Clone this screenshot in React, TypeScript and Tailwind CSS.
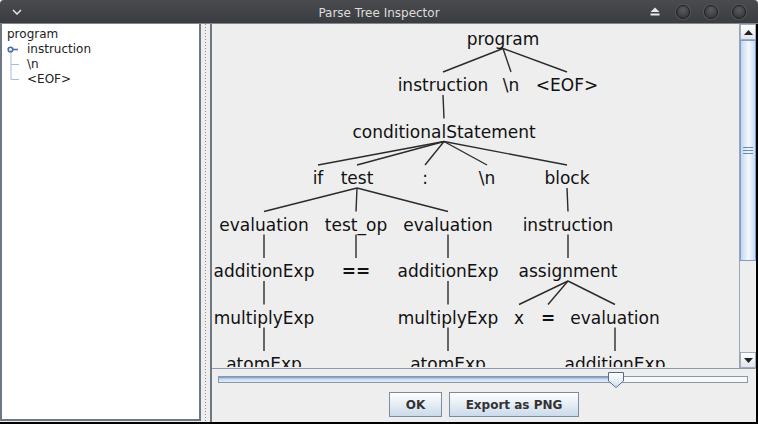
import React from "react";

type Node = { id: string; label: string; x: number; row: number; parent?: string; bold?: boolean };

// page coordinates of each node centre, rows are 46.5px apart
const nodes: Node[] = [
  { id: "program", label: "program", x: 503, row: 0 },
  { id: "instr", label: "instruction", x: 443, row: 1, parent: "program" },
  { id: "nl1", label: "\\n", x: 511, row: 1, parent: "program" },
  { id: "eof", label: "<EOF>", x: 567, row: 1, parent: "program" },
  { id: "cond", label: "conditionalStatement", x: 444, row: 2, parent: "instr" },
  { id: "if", label: "if", x: 318, row: 3, parent: "cond" },
  { id: "test", label: "test", x: 357, row: 3, parent: "cond" },
  { id: "colon", label: ":", x: 425, row: 3, parent: "cond" },
  { id: "nl2", label: "\\n", x: 487, row: 3, parent: "cond" },
  { id: "block", label: "block", x: 567, row: 3, parent: "cond" },
  { id: "ev1", label: "evaluation", x: 264, row: 4, parent: "test" },
  { id: "testop", label: "test_op", x: 356, row: 4, parent: "test" },
  { id: "ev2", label: "evaluation", x: 448, row: 4, parent: "test" },
  { id: "instr2", label: "instruction", x: 568, row: 4, parent: "block" },
  { id: "add1", label: "additionExp", x: 264, row: 5, parent: "ev1" },
  { id: "eq", label: "==", x: 356, row: 5, parent: "testop", bold: true },
  { id: "add2", label: "additionExp", x: 448, row: 5, parent: "ev2" },
  { id: "assign", label: "assignment", x: 568, row: 5, parent: "instr2" },
  { id: "mul1", label: "multiplyExp", x: 264, row: 6, parent: "add1" },
  { id: "mul2", label: "multiplyExp", x: 448, row: 6, parent: "add2" },
  { id: "x", label: "x", x: 519, row: 6, parent: "assign" },
  { id: "assigneq", label: "=", x: 548, row: 6, parent: "assign", bold: true },
  { id: "ev3", label: "evaluation", x: 615, row: 6, parent: "assign" },
  { id: "atom1", label: "atomExp", x: 264, row: 7, parent: "mul1" },
  { id: "atom2", label: "atomExp", x: 448, row: 7, parent: "mul2" },
  { id: "add3", label: "additionExp", x: 615, row: 7, parent: "ev3" },
];

const OX = 212;
const OY = 25;
const baseline = (row: number) => 45.5 + row * 46.5 - OY;

function ParseTree() {
  const byId = new Map(nodes.map((n) => [n.id, n]));
  return (
    <svg width={526} height={343} className="block">
      {nodes
        .filter((n) => n.parent)
        .map((n) => {
          const p = byId.get(n.parent!)!;
          return (
            <line
              key={"l" + n.id}
              x1={p.x - OX}
              y1={baseline(p.row) + 4}
              x2={n.x - OX}
              y2={baseline(n.row) - 19}
              stroke="#2b2b2b"
              strokeWidth={1.4}
            />
          );
        })}
      {nodes.map((n) => (
        <text
          key={n.id}
          x={n.x - OX}
          y={baseline(n.row)}
          textAnchor="middle"
          fontSize={17}
          fontWeight={n.bold ? 700 : 400}
          fill="#111"
          style={{ fontFamily: "'DejaVu Sans', sans-serif" }}
        >
          {n.label}
        </text>
      ))}
    </svg>
  );
}

function Connector({ handle, last }: { handle?: boolean; last?: boolean }) {
  return (
    <svg width={25} height={15} className="shrink-0">
      {handle ? (
        <>
          <line x1={9} y1={7.5} x2={9} y2={15} stroke="#a9bcd4" />
          <circle cx={8.5} cy={7.5} r={2.3} fill="none" stroke="#4a6ea8" strokeWidth={1.6} />
          <line x1={11} y1={7.5} x2={16} y2={7.5} stroke="#4a6ea8" strokeWidth={1.6} />
        </>
      ) : (
        <>
          <line x1={9} y1={0} x2={9} y2={last ? 7.5 : 15} stroke="#a9bcd4" />
          <line x1={9} y1={7.5} x2={17} y2={7.5} stroke="#a9bcd4" />
        </>
      )}
    </svg>
  );
}

function TitleBar() {
  return (
    <div className="relative flex h-[24px] items-center rounded-t-[4px] bg-[linear-gradient(to_bottom,#4a4b4e,#3b3c3f)] border-b border-[#7c8995]">
      <svg width={10} height={6} className="ml-[12px]" viewBox="0 0 10 6">
        <path d="M1 1 L5 5 L9 1" fill="none" stroke="#e4e4e4" strokeWidth={1.5} />
      </svg>
      <div className="absolute left-0 right-0 top-[4px] text-center text-[12px] text-[#dcdcdc]">
        Parse Tree Inspector
      </div>
      <div className="ml-auto mr-[12px] flex items-center gap-[14px]">
        <svg width={10} height={9} viewBox="0 0 10 9" className="mr-[2px]">
          <path d="M5 0.5 L9.5 5 L0.5 5 Z" fill="#e8e8e8" />
          <rect x={0.5} y={6.5} width={9} height={2} fill="#e8e8e8" />
        </svg>
        {[0, 1, 2].map((i) => (
          <div
            key={i}
            className="h-[14px] w-[14px] rounded-full border border-[#222] bg-[radial-gradient(circle_at_50%_35%,#5a5b5f,#2e2f31)] shadow-[0_0_0_1px_#55565a]"
          />
        ))}
      </div>
    </div>
  );
}

function VScrollBar() {
  return (
    <div className="flex w-[17px] flex-col border-l border-[#9aa7b4] bg-[#eeeeee]">
      <div className="flex h-[16px] items-center justify-center border border-[#a3adb8] bg-[linear-gradient(to_bottom,#ffffff,#dfe5ec)]">
        <svg width={9} height={5} viewBox="0 0 9 5">
          <path d="M4.5 0 L9 5 L0 5 Z" fill="#222" />
        </svg>
      </div>
      <div className="flex h-[221px] items-center justify-center border border-[#7b9bd2] bg-[linear-gradient(to_right,#c5d8ee,#f4f8fc_55%,#c9dbef)]">
        <div className="flex w-[10px] flex-col gap-[2px]">
          <div className="h-px bg-[#6689c2]" />
          <div className="h-px bg-[#6689c2]" />
          <div className="h-px bg-[#6689c2]" />
        </div>
      </div>
      <div className="flex-1" />
      <div className="flex h-[16px] items-center justify-center border border-[#a3adb8] bg-[linear-gradient(to_bottom,#ffffff,#dfe5ec)]">
        <svg width={9} height={5} viewBox="0 0 9 5">
          <path d="M0 0 L9 0 L4.5 5 Z" fill="#222" />
        </svg>
      </div>
    </div>
  );
}

function Slider() {
  return (
    <div className="relative mx-[6px] mt-[6px] h-[16px]">
      <div className="absolute left-0 right-[2px] top-[1px] flex h-[7px] border border-[#8a98a8] bg-[#f6f8fa]">
        <div className="h-full w-[392px] border-r border-[#6d8fc6] bg-[linear-gradient(to_bottom,#6f93cc,#c8daef_40%,#e4edf8)]" />
      </div>
      <svg width={16} height={16} viewBox="0 0 16 16" className="absolute left-[390px] top-[-3px]">
        <defs>
          <linearGradient id="thumb" x1="0" y1="0" x2="0" y2="1">
            <stop offset="0" stopColor="#ffffff" />
            <stop offset="1" stopColor="#d3e0ee" />
          </linearGradient>
        </defs>
        <path d="M0.5 0.5 H15.5 V9 L8 15.5 L0.5 9 Z" fill="url(#thumb)" stroke="#5b6b7e" />
      </svg>
    </div>
  );
}

export default function App() {
  return (
    <div
      className="flex h-[424px] w-[758px] flex-col overflow-hidden bg-[#eeeeee]"
      style={{ fontFamily: "'DejaVu Sans', sans-serif" }}
    >
      <TitleBar />
      <div className="flex min-h-0 flex-1 border-b-2 border-r-2 border-black">
        {/* tree list */}
        <div className="mb-[1px] w-[201px] border-b-2 border-l-2 border-r-2 border-[#6e7884] bg-white pt-[3px] text-[12px] leading-[15px] text-[#222]">
          <div className="h-[15px] pl-[5px]">program</div>
          <div className="flex h-[15px]">
            <Connector handle />
            <span>instruction</span>
          </div>
          <div className="flex h-[15px]">
            <Connector />
            <span>\n</span>
          </div>
          <div className="flex h-[15px]">
            <Connector last />
            <span>&lt;EOF&gt;</span>
          </div>
        </div>
        {/* splitter */}
        <div className="flex w-[9px] justify-center bg-[#eeeeee] pl-[1px]">
          <div className="w-[2px] bg-[linear-gradient(to_bottom,#8c8c8c_1px,transparent_1px)] bg-[length:1px_3px] bg-repeat-y" />
        </div>
        {/* right panel */}
        <div className="flex min-w-0 flex-1 flex-col border-l-2 border-[#6e7884]">
          <div className="flex h-[344px]">
            <div className="min-w-0 flex-1 overflow-hidden bg-[#eeeeee]">
              <ParseTree />
            </div>
            <VScrollBar />
          </div>
          <div className="flex flex-1 flex-col border-t border-[#8d9aa8] bg-[#eeeeee]">
            <Slider />
            <div className="mt-[1px] flex justify-center gap-[7px]">
              <button className="h-[25px] w-[53px] border border-[#7a8ca2] bg-[linear-gradient(to_bottom,#ffffff,#cbdaea)] text-[12px] font-bold text-[#333]">
                OK
              </button>
              <button className="h-[25px] w-[130px] border border-[#7a8ca2] bg-[linear-gradient(to_bottom,#ffffff,#cbdaea)] text-[12px] font-bold text-[#333]">
                Export as PNG
              </button>
            </div>
          </div>
        </div>
      </div>
    </div>
  );
}
